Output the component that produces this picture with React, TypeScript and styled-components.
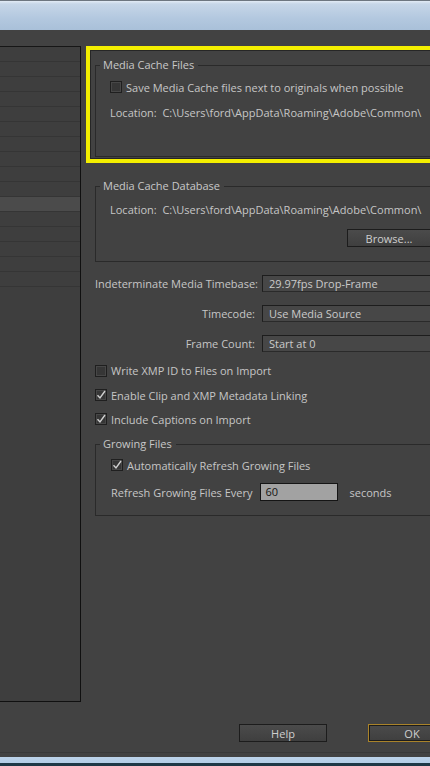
import React from "react";
import styled, { createGlobalStyle } from "styled-components";

const Global = createGlobalStyle`
  html, body { margin: 0; padding: 0; background: #424242; }
  body { overflow: hidden; }
  * { box-sizing: border-box; }
`;

const FONT = `"Open Sans", "Liberation Sans", sans-serif`;

const Window = styled.div`
  width: 430px;
  height: 766px;
  overflow: hidden;
  background: #424242;
  display: flex;
  flex-direction: column;
  font-family: ${FONT};
  font-size: 11px;
  color: #c6c6c6;
`;

const TitleBar = styled.div`
  flex: 0 0 30px;
  border-top: 1px solid #6d7680;
  background: linear-gradient(#e2ebf5 0px, #c6d6e8 3px, #b3c8df 60%, #a9c0d9 100%);
`;

const Main = styled.div`
  flex: 0 0 672px;
  display: flex;
  padding-top: 16px;
  width: 480px;
`;

const LeftPanel = styled.div`
  flex: 0 0 81px;
  height: 656px;
  background: #3e3e3e;
  border-top: 1px solid #161616;
  border-right: 1px solid #101010;
  border-bottom: 1px solid #101010;
  display: flex;
  flex-direction: column;
`;

const ListRow = styled.div<{ $selected?: boolean }>`
  flex: 0 0 15px;
  border-bottom: 1px solid #353535;
  background: ${(p) => (p.$selected ? "#4b4b4b" : "transparent")};
`;

const RightColumn = styled.div`
  margin-left: 5px;
  width: 380px;
  display: flex;
  flex-direction: column;
`;

const Highlight = styled.div`
  height: 117px;
  border: 4px solid #f4ef00;
  box-shadow: inset 0 0 0 1px #262626;
  padding: 8px 0 2px 5px;
  display: flex;
  flex-direction: column;
`;

const Group = styled.fieldset<{ $pt: number; $pb: number }>`
  margin: 0;
  border: 1px solid #2a2a2a;
  border-right: none;
  padding: ${(p) => `${p.$pt}px 0 ${p.$pb}px 0`};
  display: flex;
  flex-direction: column;
  min-width: 0;
`;

const FillGroup = styled(Group)`
  flex: 1;
`;

const OuterGroup = styled(Group)<{ $mt: number }>`
  margin-top: ${(p) => p.$mt}px;
  margin-left: 9px;
`;

const GroupBody = styled.div<{ $pl: number }>`
  padding-left: ${(p) => p.$pl}px;
  display: flex;
  flex-direction: column;
  align-items: flex-start;
`;

const Legend = styled.legend`
  margin-left: 4px;
  padding: 0 4px 0 3px;
  line-height: 14px;
  color: #c8c8c8;
`;

const TextLine = styled.div<{ $mt?: number }>`
  line-height: 14px;
  margin-top: ${(p) => p.$mt ?? 0}px;
  white-space: nowrap;
`;

const CheckRow = styled.label<{ $h?: number }>`
  display: flex;
  align-items: center;
  gap: 4px;
  height: ${(p) => p.$h ?? 12}px;
  white-space: nowrap;
`;

const Box = styled.span`
  flex: 0 0 12px;
  width: 12px;
  height: 12px;
  background: #363636;
  border: 1px solid #1f1f1f;
  box-shadow: inset 0 0 0 1px #474747;
  display: flex;
  align-items: center;
  justify-content: center;
`;

const Check = ({ checked }: { checked?: boolean }) => (
  <Box>
    {checked && (
      <svg width="10" height="10" viewBox="0 0 10 10">
        <path d="M1.5 5.2 L4 8 L9 1" fill="none" stroke="#d0d0d0" strokeWidth="1.4" />
      </svg>
    )}
  </Box>
);

const Button = styled.div<{ $accent?: boolean }>`
  width: 88px;
  height: 18px;
  display: flex;
  align-items: center;
  justify-content: center;
  background: linear-gradient(#4b4b4b, #3f3f3f);
  border: 1px solid ${(p) => (p.$accent ? "#a9832a" : "#1c1c1c")};
  box-shadow: ${(p) => (p.$accent ? "inset 0 0 0 1px #1c1c1c" : "none")};
  color: #cfcfcf;
  flex-shrink: 0;
`;

const BrowseButton = styled(Button)`
  margin-left: 237px;
  margin-top: 12px;
  width: 92px;
  padding-right: 8px;
`;

const SettingsGrid = styled.div`
  margin-top: 13px;
  margin-left: 9px;
  display: grid;
  grid-template-columns: 160px 200px;
  column-gap: 7px;
  row-gap: 13px;
`;

const SettingLabel = styled.div`
  text-align: right;
  line-height: 17px;
  white-space: nowrap;
`;

const Dropdown = styled.div`
  height: 17px;
  background: #474747;
  border: 1px solid #1d1d1d;
  border-bottom-color: #2a2a2a;
  padding-left: 6px;
  line-height: 15px;
  white-space: nowrap;
  color: #cacaca;
`;

const CheckList = styled.div`
  margin-top: 6px;
  margin-left: 9px;
  display: flex;
  flex-direction: column;
`;

const RefreshRow = styled.div`
  margin-top: 12px;
  display: flex;
  align-items: center;
  white-space: nowrap;
  height: 18px;
`;

const NumberInput = styled.div`
  margin-left: 8px;
  width: 78px;
  height: 18px;
  background: #a2a2a2;
  border: 1px solid #151515;
  color: #151515;
  padding-left: 4px;
  line-height: 16px;
`;

const Unit = styled.span`
  margin-left: 11px;
`;

const ButtonRow = styled.div`
  flex: 0 0 auto;
  padding-top: 22px;
  padding-left: 239px;
  display: flex;
  gap: 41px;
  width: 520px;
`;

const Spacer = styled.div`
  flex: 1;
`;

const BottomFrame = styled.div`
  flex: 0 0 14px;
  border-top: 1px solid #393939;
  background: linear-gradient(
    #424242 0px,
    #424242 4px,
    #bcd3ea 4px,
    #b4cde6 10px,
    #1f3846 10px,
    #1f3846 14px
  );
`;

const rows = Array.from({ length: 16 }, (_, i) => i);

export default function App() {
  return (
    <Window>
      <Global />
      <TitleBar />
      <Main>
        <LeftPanel>
          {rows.map((i) => (
            <ListRow key={i} $selected={i === 10} />
          ))}
        </LeftPanel>
        <RightColumn>
          <Highlight>
            <FillGroup $pt={9} $pb={0}>
              <Legend>Media Cache Files</Legend>
              <GroupBody $pl={14}>
                <CheckRow>
                  <Check />
                  Save Media Cache files next to originals when possible
                </CheckRow>
                <TextLine $mt={13}>Location:&nbsp; C:\Users\ford\AppData\Roaming\Adobe\Common\</TextLine>
              </GroupBody>
            </FillGroup>
          </Highlight>

          <OuterGroup $mt={16} $pt={10} $pb={14}>
            <Legend>Media Cache Database</Legend>
            <GroupBody $pl={14}>
              <TextLine>Location:&nbsp; C:\Users\ford\AppData\Roaming\Adobe\Common\</TextLine>
              <BrowseButton>Browse...</BrowseButton>
            </GroupBody>
          </OuterGroup>

          <SettingsGrid>
            <SettingLabel>Indeterminate Media Timebase:</SettingLabel>
            <Dropdown>29.97fps Drop-Frame</Dropdown>
            <SettingLabel>Timecode:</SettingLabel>
            <Dropdown>Use Media Source</Dropdown>
            <SettingLabel>Frame Count:</SettingLabel>
            <Dropdown>Start at 0</Dropdown>
          </SettingsGrid>

          <CheckList>
            <CheckRow $h={25}>
              <Check />
              Write XMP ID to Files on Import
            </CheckRow>
            <CheckRow $h={24}>
              <Check checked />
              Enable Clip and XMP Metadata Linking
            </CheckRow>
            <CheckRow $h={24}>
              <Check checked />
              Include Captions on Import
            </CheckRow>
          </CheckList>

          <OuterGroup $mt={6} $pt={8} $pb={14}>
            <Legend>Growing Files</Legend>
            <GroupBody $pl={15}>
              <CheckRow>
                <Check checked />
                Automatically Refresh Growing Files
              </CheckRow>
              <RefreshRow>
                Refresh Growing Files Every
                <NumberInput>60</NumberInput>
                <Unit>seconds</Unit>
              </RefreshRow>
            </GroupBody>
          </OuterGroup>
        </RightColumn>
      </Main>
      <ButtonRow>
        <Button>Help</Button>
        <Button $accent>OK</Button>
      </ButtonRow>
      <Spacer />
      <BottomFrame />
    </Window>
  );
}
